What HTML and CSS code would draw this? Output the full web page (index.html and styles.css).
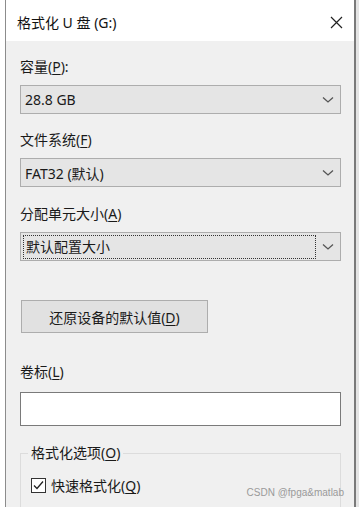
FILE: index.html
```html
<!DOCTYPE html>
<html lang="zh-CN">
<head>
    <title>格式化 U 盘 (G:)</title>
    <link rel="stylesheet" href="styles.css">
</head>
<body>
    <div class="edge-left"></div>

    <div class="dialog">
        <div class="titlebar">
            <span class="title">格式化 U 盘 (G:)</span>
            <svg class="close" width="13" height="13" viewBox="0 0 13 13">
                <path d="M1 1 L12 12 M12 1 L1 12" stroke="#222" stroke-width="1.2" fill="none"/>
            </svg>
        </div>

        <div class="content">
            <label class="field-label">容量(<u>P</u>):</label>
            <div class="combo">
                <span class="combo-text">28.8 GB</span>
                <span class="combo-arrow"><svg width="12" height="8" viewBox="0 0 12 8"><path d="M1 1.5 L6 6 L11 1.5" stroke="#555" stroke-width="1.3" fill="none"/></svg></span>
            </div>

            <label class="field-label second">文件系统(<u>F</u>)</label>
            <div class="combo">
                <span class="combo-text">FAT32 (默认)</span>
                <span class="combo-arrow"><svg width="12" height="8" viewBox="0 0 12 8"><path d="M1 1.5 L6 6 L11 1.5" stroke="#555" stroke-width="1.3" fill="none"/></svg></span>
            </div>

            <label class="field-label third">分配单元大小(<u>A</u>)</label>
            <div class="combo focused">
                <span class="combo-text">默认配置大小</span>
                <span class="combo-arrow"><svg width="12" height="8" viewBox="0 0 12 8"><path d="M1 1.5 L6 6 L11 1.5" stroke="#555" stroke-width="1.3" fill="none"/></svg></span>
            </div>

            <button class="restore">还原设备的默认值(<u>D</u>)</button>

            <label class="field-label volume">卷标(<u>L</u>)</label>
            <div class="textbox"></div>

            <div class="groupbox">
                <span class="legend">格式化选项(<u>O</u>)</span>
                <div class="check-row">
                    <span class="checkbox"><svg width="13" height="13" viewBox="0 0 13 13"><path d="M2 6.5 L5 9.5 L11 2.5" stroke="#222" stroke-width="1.3" fill="none"/></svg></span>
                    <span>快速格式化(<u>Q</u>)</span>
                </div>
            </div>
        </div>
    </div>

    <div class="edge-right"></div>

    <span class="watermark">CSDN @fpga&amp;matlab</span>
</body>
</html>
```

FILE: styles.css
```css
body {
    margin: 0;
    width: 359px;
    height: 507px;
    overflow: hidden;
    display: flex;
    background-color: #fff;
    font-family: "Noto Sans", "Noto Sans CJK SC", sans-serif;
    font-size: 14px;
    color: #1a1a1a;
    position: relative;
}

u {
    text-decoration-thickness: 1px;
    text-underline-offset: 2px;
}

.edge-left {
    width: 5px;
    background-color: #fff;
}

.edge-right {
    width: 3px;
    background-color: #e4e4e4;
}

.dialog {
    width: 349px;
    border-left: 1px solid #8c8c8c;
    border-right: 2px solid #7a7a7a;
    background-color: #f0f0f0;
    display: flex;
    flex-direction: column;
    overflow: hidden;
}

.titlebar {
    flex-shrink: 0;
    height: 41px;
    background-color: #fff;
    display: flex;
    align-items: center;
    justify-content: space-between;
    padding: 0 11px 0 11px;
}

.title {
    font-size: 14px;
    color: #111;
    margin-top: 3px;
}

.close {
    margin-top: 3px;
}

.content {
    flex-shrink: 0;
    padding: 16px 14px 0 14px;
    display: flex;
    flex-direction: column;
    align-items: flex-start;
}

.field-label {
    line-height: 20px;
    height: 20px;
    margin-bottom: 8px;
}

.field-label.second {
    margin-top: 16px;
}

.field-label.third {
    margin-top: 17px;
}

.field-label.volume {
    margin-top: 29px;
    margin-bottom: 10px;
}

.combo {
    flex-shrink: 0;
    width: 321px;
    height: 29px;
    box-sizing: border-box;
    border: 1px solid #adadad;
    background-color: #e5e5e5;
    display: flex;
    align-items: center;
}

.combo-text {
    flex: 1;
    padding-left: 4px;
}

.combo-arrow {
    width: 24px;
    display: flex;
    justify-content: center;
    align-items: center;
}

.combo.focused .combo-text {
    margin: 3px 0 3px 2px;
    padding: 1px 0 1px 2px;
    height: 20px;
    line-height: 20px;
    border: 1px dotted #333;
}

.restore {
    flex-shrink: 0;
    margin-top: 39px;
    margin-left: 1px;
    width: 187px;
    height: 33px;
    background-color: #e1e1e1;
    border: 1px solid #adadad;
    font-family: inherit;
    font-size: 14px;
    color: #1a1a1a;
    padding: 0;
}

.textbox {
    flex-shrink: 0;
    width: 321px;
    height: 34px;
    box-sizing: border-box;
    background-color: #fff;
    border: 1px solid #7a7a7a;
}

.groupbox {
    flex-shrink: 0;
    margin-top: 27px;
    width: 321px;
    height: 80px;
    box-sizing: border-box;
    border: 1px solid #dcdcdc;
    position: relative;
    padding: 21px 0 0 10px;
}

.legend {
    position: absolute;
    top: -11px;
    left: 7px;
    padding: 0 3px;
    background-color: #f0f0f0;
    line-height: 20px;
}

.check-row {
    display: flex;
    align-items: center;
    gap: 5px;
}

.checkbox {
    width: 15px;
    height: 15px;
    box-sizing: border-box;
    border: 1px solid #333;
    background-color: #fff;
    display: flex;
    align-items: center;
    justify-content: center;
}

.watermark {
    position: absolute;
    right: 15px;
    bottom: 9px;
    font-family: "Liberation Sans", sans-serif;
    font-size: 10px;
    color: #9a9a9a;
}
```
